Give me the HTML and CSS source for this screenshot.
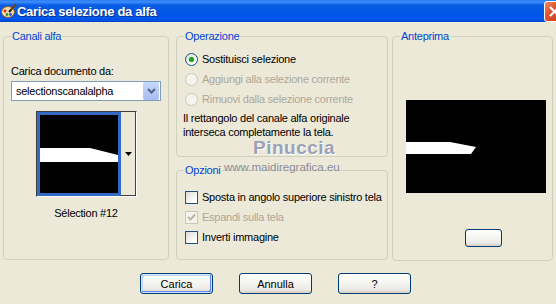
FILE: index.html
```html
<!DOCTYPE html>
<html lang="it">

<head>
    <meta charset="UTF-8">
    <title>Carica selezione da alfa</title>
    <link rel="stylesheet" href="styles.css">
</head>

<body>
    <div class="window">
        <div class="titlebar">
            <svg class="app-icon" width="16" height="16" viewBox="0 0 16 16">
                <ellipse cx="7" cy="9" rx="6.5" ry="5.5" fill="#f3d9a4" stroke="#8a5a2a" stroke-width="1"/>
                <circle cx="4" cy="8" r="1.4" fill="#e02020"/>
                <circle cx="6" cy="11.5" r="1.4" fill="#2a9a2a"/>
                <circle cx="9.5" cy="11.5" r="1.4" fill="#2050e0"/>
                <path d="M9 8 L15 1" stroke="#704010" stroke-width="2"/>
                <path d="M8 9 L10 7" stroke="#222" stroke-width="2"/>
            </svg>
            <span class="title">Carica selezione da alfa</span>
            <span class="close">
                <svg width="21" height="21" viewBox="0 0 21 21">
                    <path d="M6 6 L15 15 M15 6 L6 15" stroke="#fff" stroke-width="2.2"/>
                </svg>
            </span>
        </div>

        <div class="panes">
            <fieldset class="group col-alpha">
                <legend>Canali alfa</legend>
                <div class="field-label">Carica documento da:</div>
                <div class="combo">
                    <span class="combo-text">selectionscanalalpha</span>
                    <span class="combo-btn">
                        <svg width="9" height="6" viewBox="0 0 9 6">
                            <path d="M1 1 L4.5 4.5 L8 1" fill="none" stroke="#4d6185" stroke-width="2"/>
                        </svg>
                    </span>
                </div>
                <div class="thumb">
                    <div class="thumb-img">
                        <svg width="78" height="78" viewBox="0 0 78 78">
                            <rect width="78" height="78" fill="#000"/>
                            <polygon points="0,33 50,33 78,40 78,47 0,47" fill="#fff"/>
                        </svg>
                    </div>
                    <div class="thumb-btn">
                        <svg width="7" height="4" viewBox="0 0 7 4"><path d="M0 0 H7 L3.5 4 Z" fill="#000"/></svg>
                    </div>
                </div>
                <div class="caption">Sélection #12</div>
            </fieldset>

            <div class="col-mid">
                <fieldset class="group operation">
                    <legend>Operazione</legend>
                    <div class="option">
                        <span class="radio checked"></span>
                        <span>Sostituisci selezione</span>
                    </div>
                    <div class="option disabled">
                        <span class="radio"></span>
                        <span>Aggiungi alla selezione corrente</span>
                    </div>
                    <div class="option disabled">
                        <span class="radio"></span>
                        <span>Rimuovi dalla selezione corrente</span>
                    </div>
                    <p class="note">Il rettangolo del canale alfa originale<br>interseca completamente la tela.</p>
                </fieldset>

                <fieldset class="group options">
                    <legend>Opzioni</legend>
                    <div class="option">
                        <span class="check"></span>
                        <span>Sposta in angolo superiore sinistro tela</span>
                    </div>
                    <div class="option disabled">
                        <span class="check checked">
                            <svg width="11" height="11" viewBox="0 0 11 11">
                                <path d="M2 5 L4.5 7.5 L9 2.5" fill="none" stroke="#b9b6a8" stroke-width="2"/>
                            </svg>
                        </span>
                        <span>Espandi sulla tela</span>
                    </div>
                    <div class="option">
                        <span class="check"></span>
                        <span>Inverti immagine</span>
                    </div>
                </fieldset>
            </div>

            <fieldset class="group preview">
                <legend>Anteprima</legend>
                <div class="preview-img">
                    <svg width="140" height="93" viewBox="0 0 140 93">
                        <rect width="140" height="93" fill="#000"/>
                        <polygon points="0,42 44,42 70,47 65,54 0,54" fill="#fff"/>
                    </svg>
                </div>
                <button class="xp-btn small-btn"></button>
            </fieldset>

            <div class="watermark">
                <div class="wm-name">Pinuccia</div>
                <div class="wm-url">www.maidiregrafica.eu</div>
            </div>
        </div>

        <div class="buttons">
            <button class="xp-btn default">Carica</button>
            <button class="xp-btn">Annulla</button>
            <button class="xp-btn">?</button>
        </div>
    </div>
</body>

</html>
```

FILE: styles.css
```css
* {
    box-sizing: border-box;
}

body {
    margin: 0;
    font-family: "Liberation Sans", Arial, sans-serif;
    font-size: 11px;
    letter-spacing: -0.25px;
    color: #000;
    background-color: #ece9d8;
}

.window {
    width: 556px;
    height: 304px;
    overflow: hidden;
    background-color: #ece9d8;
}

/* title bar */
.titlebar {
    height: 22px;
    display: flex;
    align-items: center;
    overflow: hidden;
    background: linear-gradient(to bottom, #2a7cf0 0, #3d8ffd 2px, #0a5de4 5px, #0055e5 14px, #0058ee 19px, #0045c8 22px);
}

.app-icon {
    margin-left: 1px;
    flex: none;
}

.title {
    flex: 1;
    margin-left: 0;
    color: #fff;
    font-weight: bold;
    font-size: 13px;
    letter-spacing: -0.3px;
    text-shadow: 1px 1px 0 #0a2f8a;
}

.close {
    flex: none;
    width: 21px;
    height: 21px;
    margin-right: -9px;
    border: 1px solid #fff;
    border-radius: 3px;
    background: linear-gradient(135deg, #f08a6a 0, #e0542e 40%, #c53a18 100%);
    display: flex;
}

.close svg {
    margin: -1px;
}

/* panes */
.panes {
    position: relative;
    display: flex;
    padding: 7px 0 0 3px;
    height: 239px;
}

.group {
    margin: 0;
    min-width: 0;
    padding: 0 7px;
    border: 1px solid #d0d0bf;
    border-radius: 4px;
}

.group legend {
    padding: 0 1px;
    line-height: 14px;
    color: #0046d5;
}

.col-alpha {
    width: 166px;
    height: 231px;
}

.field-label {
    margin-top: 21px;
    line-height: 14px;
}

.combo {
    margin-top: 3px;
    height: 20px;
    display: flex;
    align-items: center;
    border: 1px solid #7f9db9;
    background-color: #fff;
    padding: 1px;
}

.combo-text {
    flex: 1;
    padding-left: 3px;
}

.combo-btn {
    width: 16px;
    height: 18px;
    display: flex;
    align-items: center;
    justify-content: center;
    border-radius: 2px;
    background: linear-gradient(to bottom, #c6d7fc 0, #b4c8f5 60%, #a7bdf0 100%);
}

.thumb {
    margin: 10px auto 0;
    width: 101px;
    height: 86px;
    display: flex;
    border: 1px solid;
    border-color: #404040 #fff #fff #404040;
    background-color: #fff;
}

.thumb-img {
    width: 84px;
    height: 84px;
    border: 3px solid #316ac5;
    background-color: #000;
}

.thumb-img svg {
    display: block;
}

.thumb-btn {
    flex: 1;
    display: flex;
    align-items: center;
    justify-content: center;
    background-color: #ece9d8;
    border-right: 1px solid #404040;
    border-bottom: 1px solid #404040;
    padding-left: 2px;
}

.caption {
    margin-top: 9px;
    line-height: 14px;
    text-align: center;
}

.col-mid {
    margin-left: 7px;
    width: 212px;
    flex: none;
    display: flex;
    flex-direction: column;
    gap: 6px;
}

.operation {
    height: 128px;
}

.operation .option:first-of-type {
    margin-top: 6px;
}

.options {
    height: 97px;
}

.options .option:first-of-type {
    margin-top: 10px;
}

.option {
    height: 20px;
    display: flex;
    align-items: center;
    gap: 4px;
    padding-left: 1px;
    white-space: nowrap;
}

.option.disabled {
    color: #aca899;
}

.radio {
    flex: none;
    width: 13px;
    height: 13px;
    border-radius: 50%;
    border: 1px solid #1c5180;
    background: linear-gradient(135deg, #dcdbd5 0, #fff 80%);
    display: flex;
    align-items: center;
    justify-content: center;
}

.radio.checked::after {
    content: "";
    width: 5px;
    height: 5px;
    border-radius: 50%;
    background-color: #21a121;
    box-shadow: 0 0 1px #5ed45e;
}

.disabled .radio {
    border-color: #cac8bb;
    background: #f4f3ee;
}

.check {
    flex: none;
    width: 13px;
    height: 13px;
    border: 1px solid #1c5180;
    background: linear-gradient(135deg, #dcdbd5 0, #fff 80%);
    display: flex;
}

.disabled .check {
    border-color: #cac8bb;
    background: #f4f3ee;
}

.note {
    margin: 2px 0 0 -1px;
    line-height: 14px;
}

.preview {
    margin-left: 4px;
    width: 161px;
    height: 232px;
}

.preview-img {
    margin: 57px 0 0 6px;
    width: 140px;
    height: 93px;
}

.preview-img svg {
    display: block;
}

/* buttons */
.xp-btn {
    font-family: "Liberation Sans", Arial, sans-serif;
    font-size: 11px;
    color: #000;
    border: 1px solid #003c74;
    border-radius: 3px;
    background: linear-gradient(to bottom, #fff 0, #f4f4f0 50%, #ecebe6 80%, #d6d0c5 100%);
    padding: 0;
}

.small-btn {
    display: block;
    margin: 36px 0 0 65px;
    width: 37px;
    height: 18px;
}

.buttons {
    display: flex;
    gap: 26px;
    padding: 12px 0 0 140px;
}

.buttons .xp-btn {
    width: 73px;
    height: 21px;
}

.xp-btn.default {
    box-shadow: inset 0 0 0 1px #cee7ff, inset -2px -2px 0 #6982ee, inset 2px 2px 0 #bcd4f6;
}

/* watermark overlay */
.watermark {
    position: absolute;
    left: 224px;
    top: 115px;
    color: #9ca1b6;
    pointer-events: none;
    letter-spacing: 0;
}

.wm-name {
    margin-left: 29px;
    font-size: 19px;
    font-weight: bold;
    letter-spacing: 0.5px;
    line-height: 22px;
    text-shadow: 1px 1px 0 #fff;
}

.wm-url {
    margin-top: 1px;
    font-size: 11.5px;
    line-height: 14px;
    color: #8c8c98;
}
```
